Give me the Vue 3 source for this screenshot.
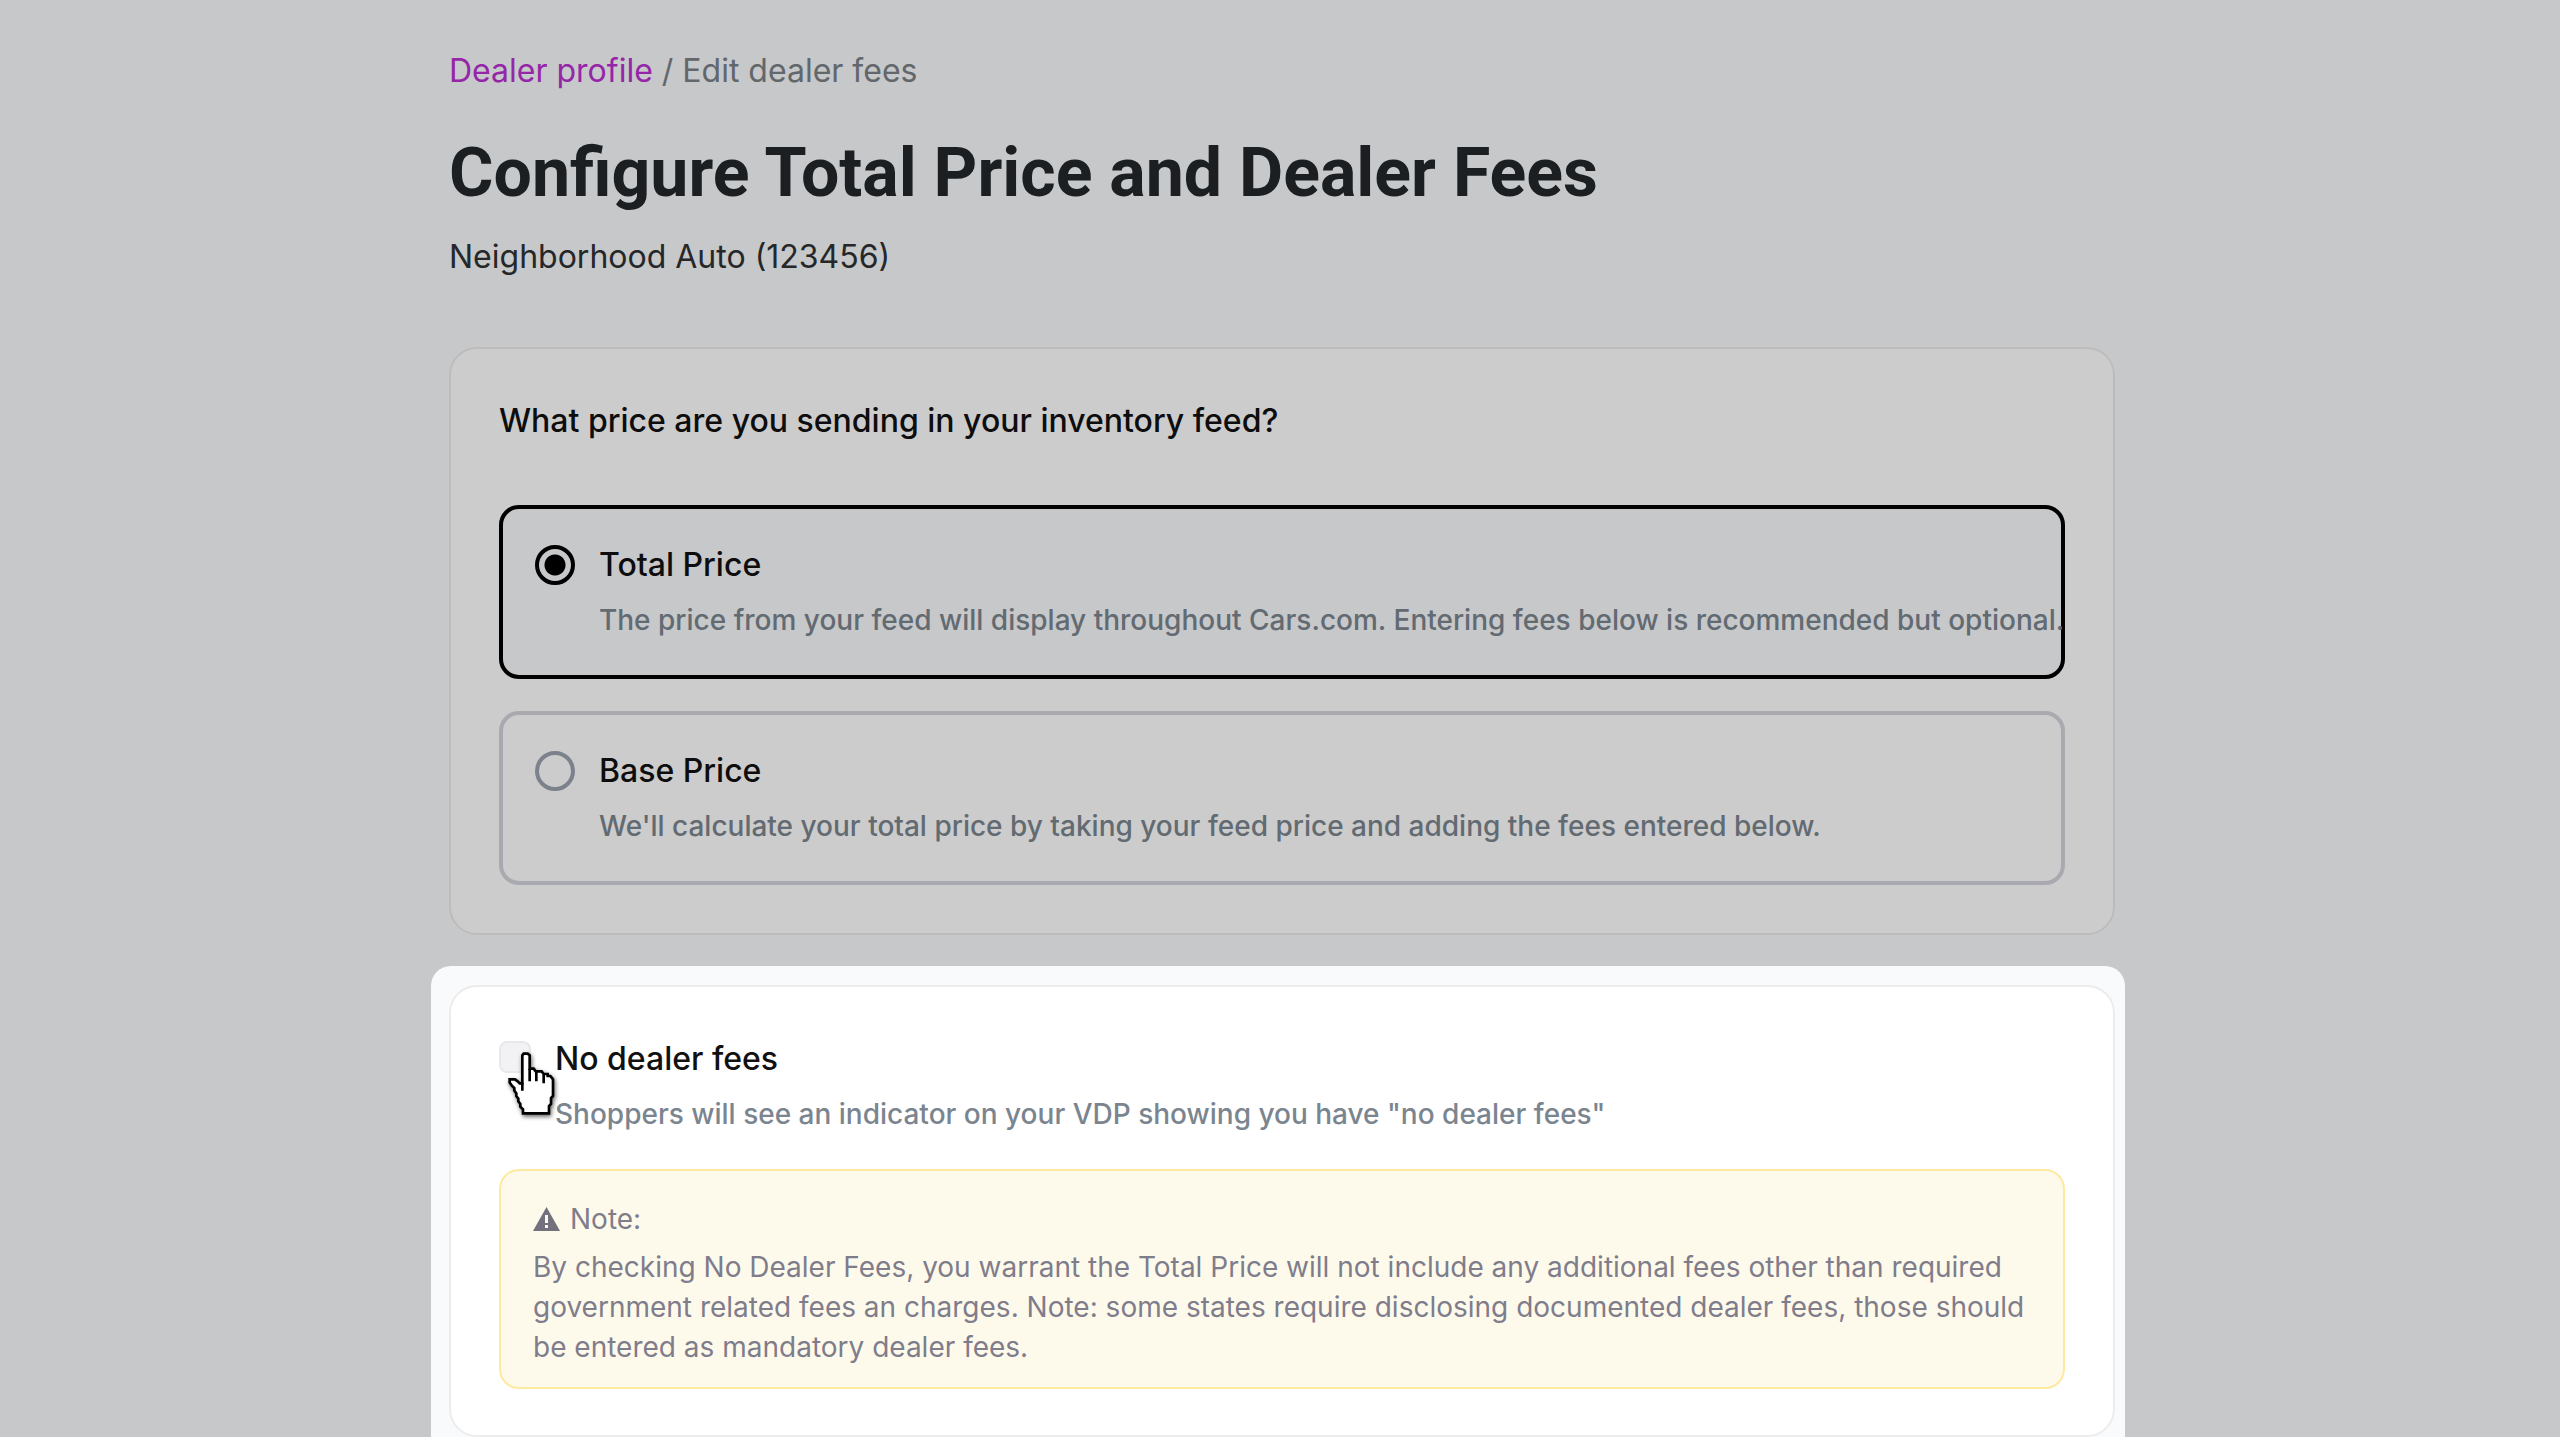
<script setup>
import { ref } from 'vue';

const priceType = ref('total');
const noDealerFees = ref(false);

const priceOptions = [
    {
        value: 'total',
        label: 'Total Price',
        text: 'The price from your feed will display throughout Cars.com. Entering fees below is recommended but optional.'
    },
    {
        value: 'base',
        label: 'Base Price',
        text: "We'll calculate your total price by taking your feed price and adding the fees entered below."
    }
];
</script>

<template>
    <div class="page">
        <main class="container">
            <nav class="breadcrumb">
                <a href="#">Dealer profile</a> / Edit dealer fees
            </nav>
            <h1 class="title">Configure Total Price and Dealer Fees</h1>
            <p class="dealer">Neighborhood Auto (123456)</p>

            <fieldset class="card">
                <legend class="question">What price are you sending in your inventory feed?</legend>
                <div class="options">
                    <label
                        v-for="option in priceOptions"
                        :key="option.value"
                        class="option"
                        :class="{ selected: priceType === option.value }"
                    >
                        <input v-model="priceType" class="radio" type="radio" name="price-type" :value="option.value" />
                        <span class="option-body">
                            <span class="label">{{ option.label }}</span>
                            <span class="description">{{ option.text }}</span>
                        </span>
                    </label>
                </div>
            </fieldset>

            <section class="card fees-card">
                <label class="check-row">
                    <input v-model="noDealerFees" class="checkbox" type="checkbox" />
                    <span class="option-body">
                        <span class="label">No dealer fees</span>
                        <span class="description">Shoppers will see an indicator on your VDP showing you have "no dealer fees"</span>
                    </span>
                </label>

                <div class="note">
                    <p class="note-title">
                        <svg class="note-icon" viewBox="0 0 27 24" aria-hidden="true">
                            <path fill="currentColor" fill-rule="evenodd" d="M13.5 0 27 24H0ZM12 8v8h3V8Zm0 10v3h3v-3Z" />
                        </svg>
                        Note:
                    </p>
                    <p>
                        By checking No Dealer Fees, you warrant the Total Price will not include any additional fees
                        other than required government related fees an charges. Note: some states require disclosing
                        documented dealer fees, those should be entered as mandatory dealer fees.
                    </p>
                </div>

                <div class="spotlight"></div>

                <svg class="pointer" viewBox="0 0 144 192" aria-hidden="true">
                    <path
                        class="hand"
                        d="M46 10 50 5H62L68 10V50H80L86 58H104L110 66H122V72H130L138 82V132L132 138V156L126 162V184H48V172L40 164V156L34 148V140L28 132V124L22 116V108L14 100L8 92V82H24L32 88L38 94H46Z"
                    />
                    <path class="fingers" d="M46 92V116M68 50V88M88 58V88M110 68V94" />
                </svg>
            </section>
        </main>
    </div>
</template>

<style>
body {
    margin: 0;
}
</style>

<style scoped>
.page {
    box-sizing: border-box;
    min-height: 100vh;
    overflow: hidden;
    background: #f9fafc;
    color: #111111;
    font-family: Inter, "Liberation Sans", sans-serif;
    font-size: 32px;
    line-height: 48px;
}

.container {
    max-width: 1666px;
    margin: 0 auto;
    padding: 47px 0 0 4px;
}

.breadcrumb {
    color: #7b8188;
}

.breadcrumb a {
    color: #bb30d2;
    text-decoration: none;
}

.title {
    margin: 38px 0 20px;
    font-family: Roboto, "Liberation Sans", sans-serif;
    font-size: 68px;
    line-height: 80px;
    font-weight: 700;
    color: #22272b;
}

.dealer {
    margin: 0 0 66px;
    color: #2f3133;
}

.card {
    position: relative;
    min-width: 0;
    margin: 0;
    padding: 48px;
    border: 2px solid #ececec;
    border-radius: 28px;
    background: #ffffff;
}

.question {
    float: left;
    width: 100%;
    padding: 0;
    margin-bottom: 60px;
    font-weight: 500;
}

.options {
    clear: both;
    display: flex;
    flex-direction: column;
    gap: 32px;
}

.option {
    display: flex;
    gap: 24px;
    padding: 32px;
    border: 4px solid #d3d5dc;
    border-radius: 20px;
}

.option.selected {
    border-color: #000000;
    background: #f9fafc;
}

.radio,
.checkbox {
    appearance: none;
    flex: none;
    box-sizing: border-box;
    margin: 0;
}

.radio {
    width: 40px;
    height: 40px;
    margin-top: 4px;
    border: 4px solid #9ca3af;
    border-radius: 50%;
}

.radio:checked {
    border-color: #000000;
    background: radial-gradient(circle, #000000 10px, transparent 11px);
}

.option-body {
    display: flex;
    flex-direction: column;
    gap: 8px;
    min-width: 0;
    white-space: nowrap;
}

.label {
    font-weight: 500;
}

.description {
    font-size: 28px;
    line-height: 46px;
    font-weight: 500;
    color: #7b858f;
}

.fees-card {
    margin-top: 50px;
    padding-bottom: 46px;
}

.check-row {
    display: flex;
    gap: 24px;
}

.checkbox {
    width: 32px;
    height: 32px;
    margin-top: 6px;
    border: 2px solid #e8e8ea;
    border-radius: 8px;
    background: #f2f2f4;
}

.checkbox:checked {
    background: #000000;
}

.note {
    margin-top: 32px;
    padding: 28px 32px 20px;
    border: 2px solid #fdeaa0;
    border-radius: 20px;
    background: #fefaeb;
    color: #7f7d8b;
    font-size: 28px;
    line-height: 40px;
}

.note p {
    margin: 0;
}

.note .note-title {
    display: flex;
    align-items: center;
    gap: 10px;
    margin-bottom: 8px;
}

.note-icon {
    width: 27px;
    height: 24px;
    color: #74717f;
}

/* Dims everything around the highlighted card */
.spotlight {
    position: absolute;
    inset: -21px -12px -20px -20px;
    border-radius: 20px;
    box-shadow: 0 0 0 3000px rgba(0, 0, 0, 0.2);
    pointer-events: none;
}

.pointer {
    position: absolute;
    top: 65px;
    left: 56px;
    width: 48px;
    height: 64px;
    overflow: visible;
    filter: drop-shadow(1px 2px 2px rgba(0, 0, 0, 0.6));
    pointer-events: none;
}

.hand {
    fill: #ffffff;
    stroke: #000000;
    stroke-width: 8;
}

.fingers {
    fill: none;
    stroke: #000000;
    stroke-width: 8;
}
</style>
